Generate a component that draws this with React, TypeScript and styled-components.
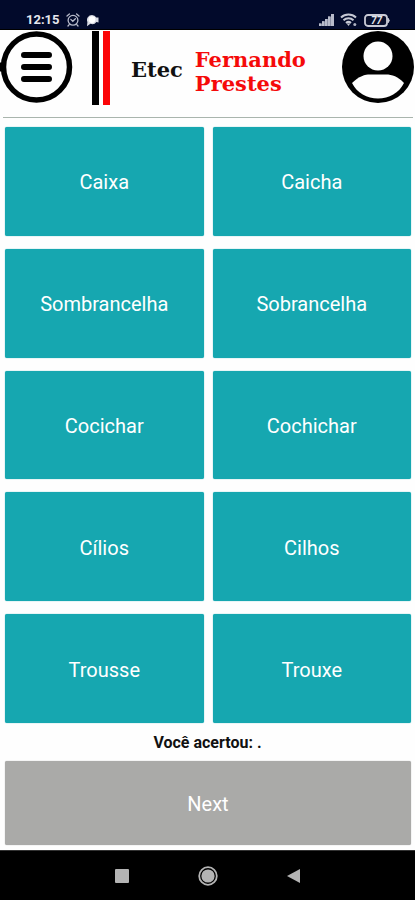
import React, { useState } from "react";
import styled, { createGlobalStyle } from "styled-components";

const GlobalStyle = createGlobalStyle`
  *, *::before, *::after { box-sizing: border-box; }
  body { margin: 0; background: #fff; font-family: Roboto, sans-serif; }
  button { font-family: inherit; border: 0; padding: 0; cursor: pointer; }
  svg { display: block; flex: none; }
`;

const Screen = styled.div`
  min-height: 100vh;
  display: flex;
  flex-direction: column;
  background: #fefefe;
`;

const StatusBar = styled.div`
  height: 30px;
  flex: none;
  display: flex;
  justify-content: space-between;
  align-items: flex-end;
  padding: 0 24px 2px 26px;
  background: #020a2b;
  border-bottom: 1px solid #000;
  color: #e6e7ee;
`;

const StatusGroup = styled.div`
  display: flex;
  align-items: center;
  gap: 6px;
`;

const Clock = styled.time`
  font-size: 13px;
  line-height: 14px;
  font-weight: 700;
`;

const Header = styled.header`
  height: 84px;
  flex: none;
  display: flex;
  justify-content: space-between;
  align-items: flex-start;
  padding: 1px 1px 0 0;
`;

const IconButton = styled.button`
  background: none;
  border-radius: 50%;
`;

const Brand = styled.div`
  flex: 1;
  display: flex;
  align-items: flex-start;
  padding-left: 19px;
  font-family: "DejaVu Serif", serif;
  font-size: 21px;
  line-height: 24px;
  font-weight: 700;
`;

const Stripe = styled.span<{ $color: string }>`
  width: 7px;
  height: 74px;
  margin-right: 4px;
  background: ${(p) => p.$color};
`;

const School = styled.span`
  margin: 27px 0 0 17px;
  color: #111;
`;

const SchoolName = styled.span`
  margin: 17px 0 0 12px;
  color: #f50a0a;
`;

const Divider = styled.hr`
  width: calc(100% - 5px);
  height: 1px;
  margin: 3px 2px 9px 3px;
  border: 0;
  flex: none;
  background: #a9b5ad;
`;

const WordGrid = styled.main`
  flex: 1;
  display: grid;
  grid-template-columns: 1fr 1fr;
  grid-auto-rows: 1fr;
  gap: 13px 9px;
  padding: 0 4px 0 5px;
`;

const Tile = styled.button<{ $muted?: boolean }>`
  min-height: 84px;
  padding-top: 2px;
  border-radius: 2px;
  background: ${(p) => (p.$muted ? "#aaaaa8" : "#16a7b0")};
  box-shadow: 0 0 1px 0 ${(p) => (p.$muted ? "#999" : "#16a7b0")};
  color: #fff;
  font-size: 20px;
  line-height: 24px;
`;

const Score = styled.p`
  margin: 0;
  padding: 10px 0 8px;
  text-align: center;
  font-size: 16px;
  line-height: 20px;
  font-weight: 700;
  color: #111;
`;

const Footer = styled.div`
  display: grid;
  padding: 0 4px 5px 5px;
`;

const NavBar = styled.nav`
  height: 50px;
  flex: none;
  display: flex;
  justify-content: center;
  align-items: center;
  gap: 66px;
  background: #000;
  border-top: 1px solid #333;
`;

const NavButton = styled.button`
  background: none;
  color: #b4b4b4;
`;

const words = [
  "Caixa", "Caicha",
  "Sombrancelha", "Sobrancelha",
  "Cocichar", "Cochichar",
  "Cílios", "Cilhos",
  "Trousse", "Trouxe",
];

const AlarmIcon = () => (
  <svg width="14" height="14" viewBox="0 0 14 14" fill="none" stroke="#b9bccb" strokeWidth="1.3" strokeLinecap="round">
    <circle cx="7" cy="7.3" r="4.9" />
    <path d="M1 3 3.4 1M13 3 10.6 1M3.2 11.6 2 13M10.8 11.6 12 13M4.8 6.4 6.8 8.3 9.4 5.8" />
  </svg>
);

const ChatIcon = () => (
  <svg width="13" height="13" viewBox="0 0 13 13">
    <path d="M6 1a5 5 0 0 1 4.3 2.6L12.5 3.4v5l-2.1-.4A5 5 0 0 1 4.4 9.8L1 12.2 1.4 8A5 5 0 0 1 6 1Z" fill="#d9dbe4" />
    <circle cx="6" cy="5.6" r="3.4" fill="#fff" />
  </svg>
);

const SignalIcon = () => (
  <svg width="15" height="12" viewBox="0 0 15 12">
    <path d="M0 9.5h3V12H0zM3 7.2h3V12H3zM6 5h3v7H6zM9 2.5h3V12H9zM12 0h3v12h-3z" fill="#8d91a5" />
    <path d="M0 9.5h2V12H0zM3 7.2h2V12H3zM6 5h2v7H6zM9 2.5h2V12H9zM12 0h3v12h-3z" fill="#b8bbca" />
  </svg>
);

const WifiIcon = () => (
  <svg width="18" height="14" viewBox="0 0 18 14" fill="none" stroke="#c5c8d4" strokeWidth="2">
    <path d="M1 4.5a11 11 0 0 1 15 0M3.5 7.3a7.2 7.2 0 0 1 10 0M6 10a3.8 3.8 0 0 1 5 0" />
    <path d="m8.5 13 1.8-2.4H6.7z" fill="#c5c8d4" stroke="none" />
    <circle cx="14.8" cy="11.6" r="1.5" fill="#aeb2c2" stroke="none" />
  </svg>
);

const BatteryIcon = () => (
  <svg width="27" height="13" viewBox="0 0 27 13" role="img" aria-label="77%">
    <rect x="1" y="1" width="22" height="11" rx="3" fill="#080f2c" stroke="#c9cbd6" strokeWidth="1.8" />
    <path d="M24 4.2q2.6 2.3 0 4.6z" fill="#c9cbd6" stroke="#c9cbd6" />
    <text x="12.5" y="10" textAnchor="middle" fontFamily="Roboto, sans-serif" fontSize="10" fontWeight="700" fontStyle="italic" fill="#e4e6ed">77</text>
  </svg>
);

const MenuIcon = () => (
  <svg width="73" height="73" viewBox="0 0 73 73" fill="none" stroke="#000">
    <circle cx="36.5" cy="36" r="33" strokeWidth="5.5" />
    <path d="M0 31.5v9" strokeWidth="5" />
    <path d="M24 24h25M24 36h25M24 48h25" strokeWidth="6" strokeLinecap="round" />
  </svg>
);

const UserIcon = () => (
  <svg width="72" height="73" viewBox="0 0 72 73">
    <circle cx="36" cy="36" r="36" fill="#000" />
    <circle cx="36" cy="25" r="14.5" fill="#fefefe" />
    <path d="M10 52C17 45 23 43.5 28 43.5h16c6 0 12 2 18 8.5C57 62 47 67.5 36 67.5S15 62 10 52Z" fill="#fefefe" />
  </svg>
);

export default function App() {
  const [, setChoice] = useState<string | null>(null);
  return (
    <Screen>
      <GlobalStyle />
      <StatusBar>
        <StatusGroup>
          <Clock>12:15</Clock>
          <AlarmIcon />
          <ChatIcon />
        </StatusGroup>
        <StatusGroup>
          <SignalIcon />
          <WifiIcon />
          <BatteryIcon />
        </StatusGroup>
      </StatusBar>
      <Header>
        <IconButton aria-label="Menu"><MenuIcon /></IconButton>
        <Brand>
          <Stripe $color="#000" />
          <Stripe $color="#fb0507" />
          <School>Etec</School>
          <SchoolName>Fernando<br />Prestes</SchoolName>
        </Brand>
        <IconButton aria-label="Perfil"><UserIcon /></IconButton>
      </Header>
      <Divider />
      <WordGrid>
        {words.map((word) => (
          <Tile key={word} onClick={() => setChoice(word)}>{word}</Tile>
        ))}
      </WordGrid>
      <Score>Você acertou: .</Score>
      <Footer>
        <Tile $muted>Next</Tile>
      </Footer>
      <NavBar>
        <NavButton aria-label="Recentes">
          <svg width="20" height="20" viewBox="0 0 20 20"><rect x="3" y="3" width="14" height="14" rx="1" fill="currentColor" /></svg>
        </NavButton>
        <NavButton aria-label="Início">
          <svg width="20" height="20" viewBox="0 0 20 20">
            <circle cx="10" cy="10" r="8.8" fill="none" stroke="currentColor" strokeWidth="1.8" />
            <circle cx="10" cy="10" r="6.6" fill="currentColor" />
          </svg>
        </NavButton>
        <NavButton aria-label="Voltar">
          <svg width="20" height="20" viewBox="0 0 20 20"><path d="M3 10 16 3v14z" fill="currentColor" /></svg>
        </NavButton>
      </NavBar>
    </Screen>
  );
}
